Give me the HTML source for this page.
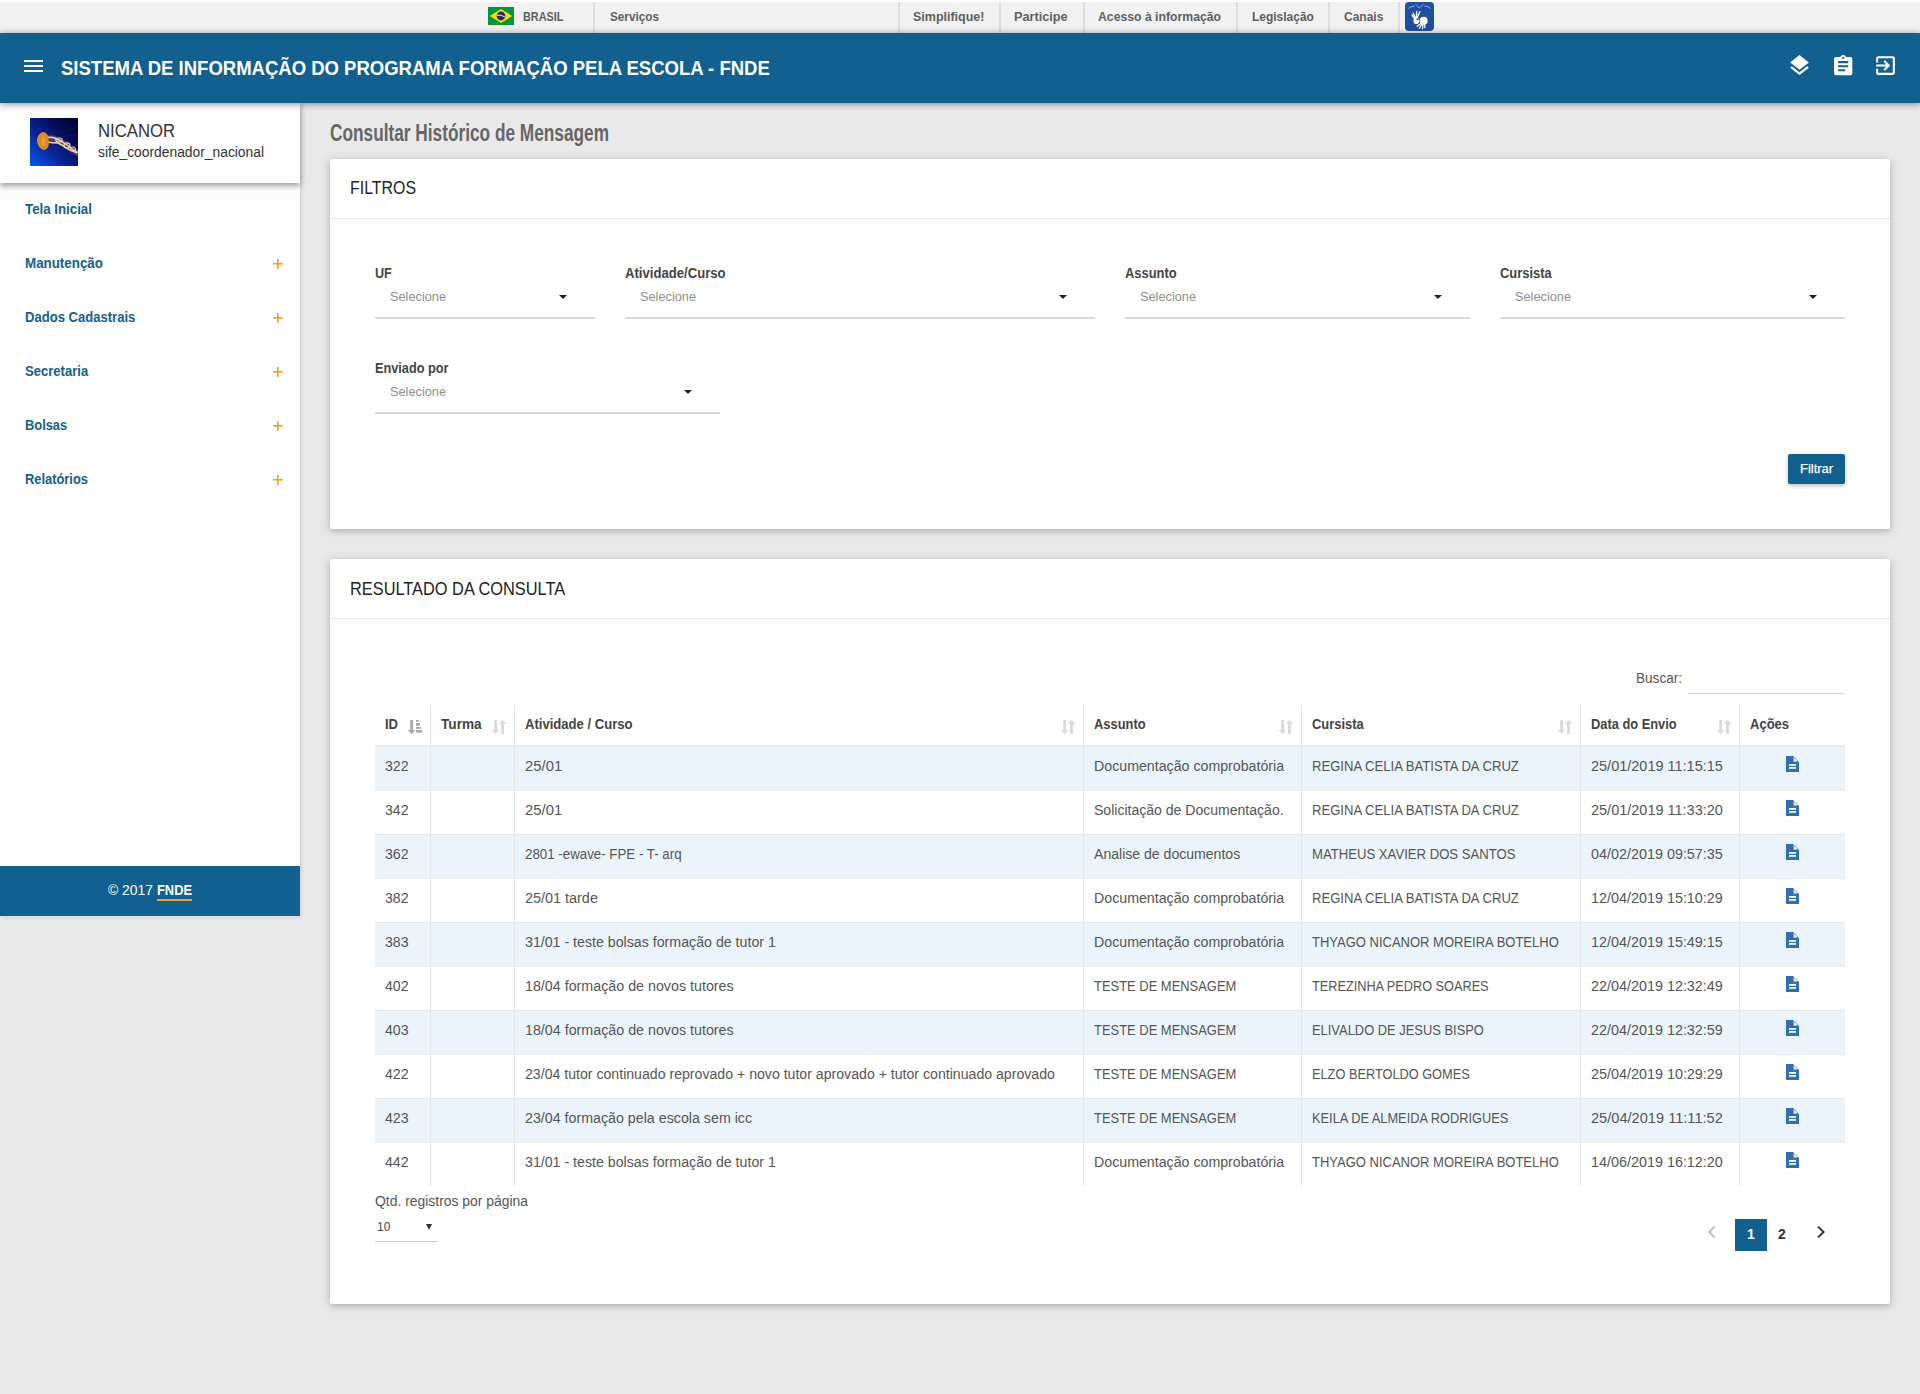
<!DOCTYPE html>
<html lang="pt">
<head>
<meta charset="utf-8">
<title>Consultar Histórico de Mensagem</title>
<style>
*{box-sizing:border-box;margin:0;padding:0}
html,body{width:1920px;height:1394px;overflow:hidden}
body{background:#e9e9e9;font-family:"Liberation Sans",sans-serif;position:relative;color:#444}
.abs{position:absolute}
.sx{display:inline-block;transform-origin:0 50%}
#topw{position:absolute;left:0;top:0;width:1920px;height:2px;background:#fff}
#gov{position:absolute;left:0;top:2px;width:1920px;height:31px;background:#f1f1f1;z-index:2}
#gov .t{position:absolute;top:-1px;height:31px;line-height:31px;font-size:13px;font-weight:bold;color:#5f5f5f;white-space:nowrap}
#gov .sep{position:absolute;top:0;width:2px;height:31px;background:#dedede}
#hdr{position:absolute;left:0;top:33px;width:1920px;height:70px;background:#12608f;box-shadow:0 1px 7px rgba(0,0,0,.45);z-index:3}
#hdr .title{position:absolute;left:61px;top:0;line-height:70px;font-size:20px;font-weight:bold;color:#fff;white-space:nowrap}
.ham{position:absolute;left:24px;width:19px;height:2px;background:#fff}
#side{position:absolute;left:0;top:103px;width:300px;height:813px;background:#fdfdfd;box-shadow:1px 1px 5px rgba(0,0,0,.12);z-index:1}
#user{position:absolute;left:0;top:0;width:300px;height:80px;background:#fdfdfd;box-shadow:0 3px 6px rgba(0,0,0,.38)}
.menu{position:absolute;left:25px;font-size:14px;line-height:16px;font-weight:bold;color:#165f8e;white-space:nowrap}
#foot{position:absolute;left:0;top:763px;width:300px;height:50px;background:#12608f;color:#fff;font-size:14px;line-height:16px}
#ptitle{position:absolute;left:330px;top:118.5px;font-size:23px;line-height:28px;font-weight:bold;color:#666;white-space:nowrap}
.card{position:absolute;left:330px;width:1560px;background:#fff;border-radius:2px;box-shadow:0 2px 5px rgba(0,0,0,.16),0 2px 14px rgba(0,0,0,.13)}
.ch{position:absolute;font-size:18px;line-height:20px;color:#222;white-space:nowrap}
.cl{position:absolute;width:1560px;height:1px;background:#e9e9e9}
.lbl{position:absolute;font-size:14px;line-height:16px;font-weight:bold;color:#444;white-space:nowrap}
.ul{position:absolute;height:2px;background:#d9d9d9}
.selt{position:absolute;font-size:13px;line-height:15px;color:#8e8e8e;white-space:nowrap}
.caret{position:absolute;width:0;height:0;border-left:4.5px solid transparent;border-right:4.5px solid transparent;border-top:4.5px solid #222}
.row{position:absolute;left:375px;width:1470px;height:44px;border-bottom:1px solid #e9e9e9}
.row.odd{background:#ebf4fb}
.vl{position:absolute;width:1px;background:#e6e6e6}
.td{position:absolute;font-size:14px;line-height:16px;color:#555;white-space:nowrap}
.th{position:absolute;font-size:14px;line-height:16px;font-weight:bold;color:#444;white-space:nowrap}
</style>
</head>
<body>

<div id="topw"></div>
<div id="gov">
<svg class="abs" style="left:488px;top:5px" width="26" height="18" viewBox="0 0 26 18"><rect width="26" height="18" fill="#009639"/><path d="M13 2 L24.2 9 L13 16 L1.8 9 Z" fill="#fedd00"/><circle cx="13" cy="9" r="4.4" fill="#27287b"/><path d="M8.8 8.3 Q13 7.2 17.2 10.2" stroke="#fff" stroke-width=".9" fill="none"/></svg>
<div class="t" style="left:522.5px"><span class="sx" style="transform:scaleX(0.8370)">BRASIL</span></div>
<div class="t" style="left:610px"><span class="sx" style="transform:scaleX(0.9040)">Serviços</span></div>
<div class="t" style="left:912.6px"><span class="sx" style="transform:scaleX(0.9598)">Simplifique!</span></div>
<div class="t" style="left:1014.4px"><span class="sx" style="transform:scaleX(0.9761)">Participe</span></div>
<div class="t" style="left:1098px"><span class="sx" style="transform:scaleX(0.9406)">Acesso à informação</span></div>
<div class="t" style="left:1251.6px"><span class="sx" style="transform:scaleX(0.9212)">Legislação</span></div>
<div class="t" style="left:1343.7px"><span class="sx" style="transform:scaleX(0.9219)">Canais</span></div>
<div class="sep" style="left:593px"></div>
<div class="sep" style="left:898px"></div>
<div class="sep" style="left:999px"></div>
<div class="sep" style="left:1083px"></div>
<div class="sep" style="left:1236px"></div>
<div class="sep" style="left:1328px"></div>
<div class="sep" style="left:1398px"></div>
<svg class="abs" style="left:1405px;top:0px" width="29" height="29" viewBox="0 0 29 29"><rect x="0" y="0" width="29" height="29" rx="4" fill="#1f4fa0"/><path d="M3.3 6.5 Q6 4.2 9.5 4 M10.8 2.3 L14.3 6.2 L18.2 2.3 M19.3 4 Q23 4.2 25.8 6.5" stroke="#fff" stroke-opacity=".6" stroke-width=".9" fill="none"/><g transform="translate(-4.8,-0.3)"><g stroke="#fff" stroke-linecap="round" fill="none"><path d="M16 17 L16.5 9.8 M17 16 L19.6 10 M15 16 L13 11.5 M14.5 17 L11.8 13.3" stroke-width="1.3"/><path d="M21.5 21 L17 24.6 M22 22 L19 26.6 M23 22 L22.2 27.2 M24.5 22 L24.6 26" stroke-width="1.2"/></g><ellipse cx="16" cy="19" rx="2.8" ry="3.4" fill="#fff"/><ellipse cx="23.4" cy="19" rx="4" ry="3.9" fill="#fff"/><circle cx="17.3" cy="17.5" r="1" fill="#1f4fa0"/></g></svg>
</div>
<div id="hdr">
<div class="ham" style="top:27px"></div>
<div class="ham" style="top:32px"></div>
<div class="ham" style="top:37px"></div>
<div class="title"><span class="sx" style="transform:scaleX(0.9254)">SISTEMA DE INFORMAÇÃO DO PROGRAMA FORMAÇÃO PELA ESCOLA - FNDE</span></div>
<svg class="abs" style="left:1787.3px;top:20.3px" width="25" height="25" viewBox="0 0 24 24"><path fill="#fff" d="M11.99 18.54l-7.37-5.73L3 14.07l9 7 9-7-1.63-1.27-7.38 5.74zM12 16l7.36-5.73L21 9l-9-7-9 7 1.63 1.27L12 16z"/></svg>
<svg class="abs" style="left:1830.8px;top:20.6px" width="24.4" height="24.4" viewBox="0 0 24 24"><path fill="#fff" d="M19 3h-4.18C14.4 1.84 13.3 1 12 1c-1.3 0-2.4.84-2.82 2H5c-1.1 0-2 .9-2 2v14c0 1.1.9 2 2 2h14c1.1 0 2-.9 2-2V5c0-1.1-.9-2-2-2zm-7 0c.55 0 1 .45 1 1s-.45 1-1 1-1-.45-1-1 .45-1 1-1zm2 14H7v-2h7v2zm3-4H7v-2h10v2zm0-4H7V7h10v2z"/></svg>
<svg class="abs" style="left:1873.2px;top:20.2px" width="25" height="25" viewBox="0 0 24 24"><path fill="#fff" d="M10.09 15.59L11.5 17l5-5-5-5-1.41 1.41L12.67 11H3v2h9.67l-2.58 2.59zM19 3H5c-1.11 0-2 .9-2 2v4h2V5h14v14H5v-4H3v4c0 1.1.89 2 2 2h14c1.1 0 2-.9 2-2V5c0-1.1-.9-2-2-2z"/></svg>
</div>
<div id="side">
<div id="user">
<svg class="abs" style="left:30px;top:15px" width="48" height="48" viewBox="0 0 48 48"><defs><linearGradient id="jg" x1="0" y1="1" x2="1" y2="0"><stop offset="0" stop-color="#0458ea"/><stop offset=".38" stop-color="#0a2596"/><stop offset=".7" stop-color="#030b58"/><stop offset="1" stop-color="#000030"/></linearGradient></defs><rect width="48" height="48" fill="url(#jg)"/><path d="M18 17 Q30 14 48 9 M19 19 Q32 20 47 16 M20 27 Q34 31 46 38" stroke="#a04018" stroke-width=".5" fill="none" opacity=".3"/><path d="M16 21 Q22 19 27 22 Q33 25 37 28 Q42 32 48 35" stroke="#d9a070" stroke-width="6" fill="none" opacity=".3" stroke-linecap="round"/><path d="M16 20 Q22 18 27 21 Q33 24 37 27 Q42 31 48 34.5" stroke="#ecd4b4" stroke-width="1.5" fill="none"/><path d="M17 24 Q23 25 28 25 Q34 28 38 31 Q43 33 47 35" stroke="#f0d4ac" stroke-width="1.4" fill="none"/><ellipse cx="29" cy="22" rx="3.2" ry="2" stroke="#f0dcc0" stroke-width="1.1" fill="none"/><ellipse cx="37" cy="27.5" rx="3" ry="2.6" stroke="#ecd2b0" stroke-width="1.1" fill="none"/><ellipse cx="43" cy="31" rx="2.4" ry="2" stroke="#f0c890" stroke-width="1.1" fill="none"/><path d="M13 14 Q7 16 7 22.5 Q7.5 30 14 32 Q18.5 31 18.8 26 L18.3 18.5 Q16.5 14 13 14 Z" fill="#df8a1e"/><path d="M12.5 19 Q10.5 22 11.5 26 Q13 28.5 15 27 Q16 24 14.5 19.5 Z" fill="#f2b050" opacity=".6"/></svg>
<div class="abs" style="left:98px;top:18px;font-size:18px;line-height:20px;color:#333;white-space:nowrap"><span class="sx" style="transform:scaleX(0.9277)">NICANOR</span></div>
<div class="abs" style="left:98px;top:41px;font-size:14px;line-height:17px;color:#333;white-space:nowrap"><span class="sx" style="transform:scaleX(0.9874)">sife_coordenador_nacional</span></div>
</div>
<div class="menu" style="top:98px"><span class="sx" style="transform:scaleX(0.9485)">Tela Inicial</span></div>
<div class="menu" style="top:152px"><span class="sx" style="transform:scaleX(0.9541)">Manutenção</span></div>
<svg class="abs" style="left:272.5px;top:156px" width="10" height="10" viewBox="0 0 10 10"><rect x="0" y="4" width="9.5" height="1.6" fill="#f5a01a"/><rect x="4" y="0" width="1.6" height="10" fill="#f5a01a"/></svg>
<div class="menu" style="top:206px"><span class="sx" style="transform:scaleX(0.9330)">Dados Cadastrais</span></div>
<svg class="abs" style="left:272.5px;top:210px" width="10" height="10" viewBox="0 0 10 10"><rect x="0" y="4" width="9.5" height="1.6" fill="#f5a01a"/><rect x="4" y="0" width="1.6" height="10" fill="#f5a01a"/></svg>
<div class="menu" style="top:260px"><span class="sx" style="transform:scaleX(0.9329)">Secretaria</span></div>
<svg class="abs" style="left:272.5px;top:264px" width="10" height="10" viewBox="0 0 10 10"><rect x="0" y="4" width="9.5" height="1.6" fill="#f5a01a"/><rect x="4" y="0" width="1.6" height="10" fill="#f5a01a"/></svg>
<div class="menu" style="top:314px"><span class="sx" style="transform:scaleX(0.9181)">Bolsas</span></div>
<svg class="abs" style="left:272.5px;top:318px" width="10" height="10" viewBox="0 0 10 10"><rect x="0" y="4" width="9.5" height="1.6" fill="#f5a01a"/><rect x="4" y="0" width="1.6" height="10" fill="#f5a01a"/></svg>
<div class="menu" style="top:368px"><span class="sx" style="transform:scaleX(0.9195)">Relatórios</span></div>
<svg class="abs" style="left:272.5px;top:372px" width="10" height="10" viewBox="0 0 10 10"><rect x="0" y="4" width="9.5" height="1.6" fill="#f5a01a"/><rect x="4" y="0" width="1.6" height="10" fill="#f5a01a"/></svg>
<div id="foot"><div class="abs" style="left:108px;top:16px;white-space:nowrap"><span class="sx" style="transform:scaleX(0.9923)">© 2017</span> <b style="position:absolute;left:49px;top:0"><span class="sx" style="transform:scaleX(0.9184)">FNDE</span><i style="position:absolute;left:0;width:35px;top:17px;height:2px;background:#f5a01a"></i></b></div></div>
</div>
<div id="ptitle"><span class="sx" style="transform:scaleX(0.7502)">Consultar Histórico de Mensagem</span></div>
<div class="card" style="top:159px;height:370px"></div>
<div class="ch" style="left:350px;top:178px"><span class="sx" style="transform:scaleX(0.8839)">FILTROS</span></div>
<div class="cl" style="left:330px;top:218px"></div>
<div class="lbl" style="left:375px;top:265px"><span class="sx" style="transform:scaleX(0.9011)">UF</span></div>
<div class="selt" style="left:390px;top:289px"><span class="sx" style="transform:scaleX(0.9808)">Selecione</span></div>
<div class="caret" style="left:558.5px;top:295px"></div>
<div class="ul" style="left:375px;top:317px;width:220px"></div>
<div class="lbl" style="left:625px;top:265px"><span class="sx" style="transform:scaleX(0.9372)">Atividade/Curso</span></div>
<div class="selt" style="left:640px;top:289px"><span class="sx" style="transform:scaleX(0.9808)">Selecione</span></div>
<div class="caret" style="left:1059.0px;top:295px"></div>
<div class="ul" style="left:625px;top:317px;width:470px"></div>
<div class="lbl" style="left:1125px;top:265px"><span class="sx" style="transform:scaleX(0.9209)">Assunto</span></div>
<div class="selt" style="left:1140px;top:289px"><span class="sx" style="transform:scaleX(0.9808)">Selecione</span></div>
<div class="caret" style="left:1433.5px;top:295px"></div>
<div class="ul" style="left:1125px;top:317px;width:345px"></div>
<div class="lbl" style="left:1500px;top:265px"><span class="sx" style="transform:scaleX(0.9210)">Cursista</span></div>
<div class="selt" style="left:1515px;top:289px"><span class="sx" style="transform:scaleX(0.9808)">Selecione</span></div>
<div class="caret" style="left:1808.5px;top:295px"></div>
<div class="ul" style="left:1500px;top:317px;width:345px"></div>
<div class="lbl" style="left:375px;top:360px"><span class="sx" style="transform:scaleX(0.9072)">Enviado por</span></div>
<div class="selt" style="left:390px;top:384px"><span class="sx" style="transform:scaleX(0.9808)">Selecione</span></div>
<div class="caret" style="left:683.5px;top:390px"></div>
<div class="ul" style="left:375px;top:412px;width:345px"></div>
<div class="abs" style="left:1788px;top:454px;width:57px;height:30px;background:#12608f;border-radius:2px;box-shadow:0 2px 4px rgba(0,0,0,.25);color:#fff;font-size:13px;line-height:30px;padding-left:12px;white-space:nowrap;-webkit-text-stroke:.25px #fff"><span class="sx" style="transform:scaleX(0.9935)">Filtrar</span></div>
<div class="card" style="top:559px;height:745px"></div>
<div class="ch" style="left:350px;top:579px"><span class="sx" style="transform:scaleX(0.9087)">RESULTADO DA CONSULTA</span></div>
<div class="cl" style="left:330px;top:618px"></div>
<div class="td" style="left:1635.5px;top:670px"><span class="sx" style="transform:scaleX(0.9692)">Buscar:</span></div>
<div class="abs" style="left:1688px;top:693px;width:157px;height:1px;background:#d6d6d6"></div>
<div class="abs" style="left:375px;top:745px;width:1470px;height:2px;background:#ebebeb"></div>
<div class="th" style="left:385px;top:716px"><span class="sx" style="transform:scaleX(0.9277)">ID</span></div>
<div class="th" style="left:441px;top:716px"><span class="sx" style="transform:scaleX(0.9743)">Turma</span></div>
<div class="th" style="left:525px;top:716px"><span class="sx" style="transform:scaleX(0.9341)">Atividade / Curso</span></div>
<div class="th" style="left:1094px;top:716px"><span class="sx" style="transform:scaleX(0.9209)">Assunto</span></div>
<div class="th" style="left:1312px;top:716px"><span class="sx" style="transform:scaleX(0.9210)">Cursista</span></div>
<div class="th" style="left:1591px;top:716px"><span class="sx" style="transform:scaleX(0.9173)">Data do Envio</span></div>
<div class="th" style="left:1750px;top:716px"><span class="sx" style="transform:scaleX(0.9300)">Ações</span></div>
<svg class="abs" style="left:407.5px;top:720px" width="15" height="15" viewBox="0 0 15 15"><rect x="2.2" y="0" width="2.9" height="10.3" fill="#a9a9a9"/><path d="M-0.4 10 H7.6 L3.6 14 Z" fill="#a9a9a9"/><rect x="8" y="0" width="2.7" height="1.8" fill="#a9a9a9"/><rect x="8" y="3" width="4" height="2.8" fill="#a9a9a9"/><rect x="8" y="7" width="5" height="1.8" fill="#a9a9a9"/><rect x="8" y="10" width="6" height="2.6" fill="#a9a9a9"/></svg>
<svg class="abs" style="left:491.5px;top:720px" width="15" height="15" viewBox="0 0 15 15"><rect x="2.2" y="0" width="2.9" height="10.3" fill="#dadada"/><path d="M-0.2 10 H7.4 L3.6 14 Z" fill="#dadada"/><rect x="9" y="3.8" width="2.9" height="10.2" fill="#dadada"/><path d="M6.8 4 H14.4 L10.6 0 Z" fill="#dadada"/></svg>
<svg class="abs" style="left:1060.5px;top:720px" width="15" height="15" viewBox="0 0 15 15"><rect x="2.2" y="0" width="2.9" height="10.3" fill="#dadada"/><path d="M-0.2 10 H7.4 L3.6 14 Z" fill="#dadada"/><rect x="9" y="3.8" width="2.9" height="10.2" fill="#dadada"/><path d="M6.8 4 H14.4 L10.6 0 Z" fill="#dadada"/></svg>
<svg class="abs" style="left:1278.5px;top:720px" width="15" height="15" viewBox="0 0 15 15"><rect x="2.2" y="0" width="2.9" height="10.3" fill="#dadada"/><path d="M-0.2 10 H7.4 L3.6 14 Z" fill="#dadada"/><rect x="9" y="3.8" width="2.9" height="10.2" fill="#dadada"/><path d="M6.8 4 H14.4 L10.6 0 Z" fill="#dadada"/></svg>
<svg class="abs" style="left:1557.5px;top:720px" width="15" height="15" viewBox="0 0 15 15"><rect x="2.2" y="0" width="2.9" height="10.3" fill="#dadada"/><path d="M-0.2 10 H7.4 L3.6 14 Z" fill="#dadada"/><rect x="9" y="3.8" width="2.9" height="10.2" fill="#dadada"/><path d="M6.8 4 H14.4 L10.6 0 Z" fill="#dadada"/></svg>
<svg class="abs" style="left:1716.5px;top:720px" width="15" height="15" viewBox="0 0 15 15"><rect x="2.2" y="0" width="2.9" height="10.3" fill="#dadada"/><path d="M-0.2 10 H7.4 L3.6 14 Z" fill="#dadada"/><rect x="9" y="3.8" width="2.9" height="10.2" fill="#dadada"/><path d="M6.8 4 H14.4 L10.6 0 Z" fill="#dadada"/></svg>
<div class="row odd" style="top:747px;height:44px"></div>
<div class="td" style="left:385px;top:758px"><span class="sx" style="transform:scaleX(1.0097)">322</span></div>
<div class="td" style="left:525px;top:758px"><span class="sx" style="transform:scaleX(1.0619)">25/01</span></div>
<div class="td" style="left:1094px;top:758px"><span class="sx" style="transform:scaleX(1.0136)">Documentação comprobatória</span></div>
<div class="td" style="left:1312px;top:758px"><span class="sx" style="transform:scaleX(0.9352)">REGINA CELIA BATISTA DA CRUZ</span></div>
<div class="td" style="left:1591px;top:758px"><span class="sx" style="transform:scaleX(1.0346)">25/01/2019 11:15:15</span></div>
<svg class="abs" style="left:1786px;top:756px" width="13" height="16" viewBox="0 0 13 16"><path d="M0 0 H7 L13 6 V16 H0 Z" fill="#2f70b4"/><path d="M7.6 1.2 V5.4 H11.8 Z" fill="#fff"/><rect x="3" y="8" width="7" height="1.8" fill="#fff"/><rect x="3" y="11" width="7" height="1.8" fill="#fff"/></svg>
<div class="row" style="top:791px;height:44px"></div>
<div class="td" style="left:385px;top:802px"><span class="sx" style="transform:scaleX(1.0097)">342</span></div>
<div class="td" style="left:525px;top:802px"><span class="sx" style="transform:scaleX(1.0619)">25/01</span></div>
<div class="td" style="left:1094px;top:802px"><span class="sx" style="transform:scaleX(1.0025)">Solicitação de Documentação.</span></div>
<div class="td" style="left:1312px;top:802px"><span class="sx" style="transform:scaleX(0.9352)">REGINA CELIA BATISTA DA CRUZ</span></div>
<div class="td" style="left:1591px;top:802px"><span class="sx" style="transform:scaleX(1.0346)">25/01/2019 11:33:20</span></div>
<svg class="abs" style="left:1786px;top:800px" width="13" height="16" viewBox="0 0 13 16"><path d="M0 0 H7 L13 6 V16 H0 Z" fill="#2f70b4"/><path d="M7.6 1.2 V5.4 H11.8 Z" fill="#fff"/><rect x="3" y="8" width="7" height="1.8" fill="#fff"/><rect x="3" y="11" width="7" height="1.8" fill="#fff"/></svg>
<div class="row odd" style="top:835px;height:44px"></div>
<div class="td" style="left:385px;top:846px"><span class="sx" style="transform:scaleX(1.0097)">362</span></div>
<div class="td" style="left:525px;top:846px"><span class="sx" style="transform:scaleX(0.9504)">2801 -ewave- FPE - T- arq</span></div>
<div class="td" style="left:1094px;top:846px"><span class="sx" style="transform:scaleX(1.0046)">Analise de documentos</span></div>
<div class="td" style="left:1312px;top:846px"><span class="sx" style="transform:scaleX(0.9376)">MATHEUS XAVIER DOS SANTOS</span></div>
<div class="td" style="left:1591px;top:846px"><span class="sx" style="transform:scaleX(1.0262)">04/02/2019 09:57:35</span></div>
<svg class="abs" style="left:1786px;top:844px" width="13" height="16" viewBox="0 0 13 16"><path d="M0 0 H7 L13 6 V16 H0 Z" fill="#2f70b4"/><path d="M7.6 1.2 V5.4 H11.8 Z" fill="#fff"/><rect x="3" y="8" width="7" height="1.8" fill="#fff"/><rect x="3" y="11" width="7" height="1.8" fill="#fff"/></svg>
<div class="row" style="top:879px;height:44px"></div>
<div class="td" style="left:385px;top:890px"><span class="sx" style="transform:scaleX(1.0097)">382</span></div>
<div class="td" style="left:525px;top:890px"><span class="sx" style="transform:scaleX(1.0291)">25/01 tarde</span></div>
<div class="td" style="left:1094px;top:890px"><span class="sx" style="transform:scaleX(1.0136)">Documentação comprobatória</span></div>
<div class="td" style="left:1312px;top:890px"><span class="sx" style="transform:scaleX(0.9352)">REGINA CELIA BATISTA DA CRUZ</span></div>
<div class="td" style="left:1591px;top:890px"><span class="sx" style="transform:scaleX(1.0262)">12/04/2019 15:10:29</span></div>
<svg class="abs" style="left:1786px;top:888px" width="13" height="16" viewBox="0 0 13 16"><path d="M0 0 H7 L13 6 V16 H0 Z" fill="#2f70b4"/><path d="M7.6 1.2 V5.4 H11.8 Z" fill="#fff"/><rect x="3" y="8" width="7" height="1.8" fill="#fff"/><rect x="3" y="11" width="7" height="1.8" fill="#fff"/></svg>
<div class="row odd" style="top:923px;height:44px"></div>
<div class="td" style="left:385px;top:934px"><span class="sx" style="transform:scaleX(1.0097)">383</span></div>
<div class="td" style="left:525px;top:934px"><span class="sx" style="transform:scaleX(1.0136)">31/01 - teste bolsas formação de tutor 1</span></div>
<div class="td" style="left:1094px;top:934px"><span class="sx" style="transform:scaleX(1.0136)">Documentação comprobatória</span></div>
<div class="td" style="left:1312px;top:934px"><span class="sx" style="transform:scaleX(0.9284)">THYAGO NICANOR MOREIRA BOTELHO</span></div>
<div class="td" style="left:1591px;top:934px"><span class="sx" style="transform:scaleX(1.0262)">12/04/2019 15:49:15</span></div>
<svg class="abs" style="left:1786px;top:932px" width="13" height="16" viewBox="0 0 13 16"><path d="M0 0 H7 L13 6 V16 H0 Z" fill="#2f70b4"/><path d="M7.6 1.2 V5.4 H11.8 Z" fill="#fff"/><rect x="3" y="8" width="7" height="1.8" fill="#fff"/><rect x="3" y="11" width="7" height="1.8" fill="#fff"/></svg>
<div class="row" style="top:967px;height:44px"></div>
<div class="td" style="left:385px;top:978px"><span class="sx" style="transform:scaleX(1.0097)">402</span></div>
<div class="td" style="left:525px;top:978px"><span class="sx" style="transform:scaleX(1.0194)">18/04 formação de novos tutores</span></div>
<div class="td" style="left:1094px;top:978px"><span class="sx" style="transform:scaleX(0.9241)">TESTE DE MENSAGEM</span></div>
<div class="td" style="left:1312px;top:978px"><span class="sx" style="transform:scaleX(0.9080)">TEREZINHA PEDRO SOARES</span></div>
<div class="td" style="left:1591px;top:978px"><span class="sx" style="transform:scaleX(1.0262)">22/04/2019 12:32:49</span></div>
<svg class="abs" style="left:1786px;top:976px" width="13" height="16" viewBox="0 0 13 16"><path d="M0 0 H7 L13 6 V16 H0 Z" fill="#2f70b4"/><path d="M7.6 1.2 V5.4 H11.8 Z" fill="#fff"/><rect x="3" y="8" width="7" height="1.8" fill="#fff"/><rect x="3" y="11" width="7" height="1.8" fill="#fff"/></svg>
<div class="row odd" style="top:1011px;height:44px"></div>
<div class="td" style="left:385px;top:1022px"><span class="sx" style="transform:scaleX(1.0097)">403</span></div>
<div class="td" style="left:525px;top:1022px"><span class="sx" style="transform:scaleX(1.0194)">18/04 formação de novos tutores</span></div>
<div class="td" style="left:1094px;top:1022px"><span class="sx" style="transform:scaleX(0.9241)">TESTE DE MENSAGEM</span></div>
<div class="td" style="left:1312px;top:1022px"><span class="sx" style="transform:scaleX(0.9219)">ELIVALDO DE JESUS BISPO</span></div>
<div class="td" style="left:1591px;top:1022px"><span class="sx" style="transform:scaleX(1.0262)">22/04/2019 12:32:59</span></div>
<svg class="abs" style="left:1786px;top:1020px" width="13" height="16" viewBox="0 0 13 16"><path d="M0 0 H7 L13 6 V16 H0 Z" fill="#2f70b4"/><path d="M7.6 1.2 V5.4 H11.8 Z" fill="#fff"/><rect x="3" y="8" width="7" height="1.8" fill="#fff"/><rect x="3" y="11" width="7" height="1.8" fill="#fff"/></svg>
<div class="row" style="top:1055px;height:44px"></div>
<div class="td" style="left:385px;top:1066px"><span class="sx" style="transform:scaleX(1.0097)">422</span></div>
<div class="td" style="left:525px;top:1066px"><span class="sx" style="transform:scaleX(1.0086)">23/04 tutor continuado reprovado + novo tutor aprovado + tutor continuado aprovado</span></div>
<div class="td" style="left:1094px;top:1066px"><span class="sx" style="transform:scaleX(0.9241)">TESTE DE MENSAGEM</span></div>
<div class="td" style="left:1312px;top:1066px"><span class="sx" style="transform:scaleX(0.9117)">ELZO BERTOLDO GOMES</span></div>
<div class="td" style="left:1591px;top:1066px"><span class="sx" style="transform:scaleX(1.0262)">25/04/2019 10:29:29</span></div>
<svg class="abs" style="left:1786px;top:1064px" width="13" height="16" viewBox="0 0 13 16"><path d="M0 0 H7 L13 6 V16 H0 Z" fill="#2f70b4"/><path d="M7.6 1.2 V5.4 H11.8 Z" fill="#fff"/><rect x="3" y="8" width="7" height="1.8" fill="#fff"/><rect x="3" y="11" width="7" height="1.8" fill="#fff"/></svg>
<div class="row odd" style="top:1099px;height:44px"></div>
<div class="td" style="left:385px;top:1110px"><span class="sx" style="transform:scaleX(1.0097)">423</span></div>
<div class="td" style="left:525px;top:1110px"><span class="sx" style="transform:scaleX(1.0168)">23/04 formação pela escola sem icc</span></div>
<div class="td" style="left:1094px;top:1110px"><span class="sx" style="transform:scaleX(0.9241)">TESTE DE MENSAGEM</span></div>
<div class="td" style="left:1312px;top:1110px"><span class="sx" style="transform:scaleX(0.9143)">KEILA DE ALMEIDA RODRIGUES</span></div>
<div class="td" style="left:1591px;top:1110px"><span class="sx" style="transform:scaleX(1.0431)">25/04/2019 11:11:52</span></div>
<svg class="abs" style="left:1786px;top:1108px" width="13" height="16" viewBox="0 0 13 16"><path d="M0 0 H7 L13 6 V16 H0 Z" fill="#2f70b4"/><path d="M7.6 1.2 V5.4 H11.8 Z" fill="#fff"/><rect x="3" y="8" width="7" height="1.8" fill="#fff"/><rect x="3" y="11" width="7" height="1.8" fill="#fff"/></svg>
<div class="row" style="top:1143px;height:44px;border-bottom:none"></div>
<div class="td" style="left:385px;top:1154px"><span class="sx" style="transform:scaleX(1.0097)">442</span></div>
<div class="td" style="left:525px;top:1154px"><span class="sx" style="transform:scaleX(1.0136)">31/01 - teste bolsas formação de tutor 1</span></div>
<div class="td" style="left:1094px;top:1154px"><span class="sx" style="transform:scaleX(1.0136)">Documentação comprobatória</span></div>
<div class="td" style="left:1312px;top:1154px"><span class="sx" style="transform:scaleX(0.9284)">THYAGO NICANOR MOREIRA BOTELHO</span></div>
<div class="td" style="left:1591px;top:1154px"><span class="sx" style="transform:scaleX(1.0262)">14/06/2019 16:12:20</span></div>
<svg class="abs" style="left:1786px;top:1152px" width="13" height="16" viewBox="0 0 13 16"><path d="M0 0 H7 L13 6 V16 H0 Z" fill="#2f70b4"/><path d="M7.6 1.2 V5.4 H11.8 Z" fill="#fff"/><rect x="3" y="8" width="7" height="1.8" fill="#fff"/><rect x="3" y="11" width="7" height="1.8" fill="#fff"/></svg>
<div class="vl" style="left:430px;top:705px;height:481px"></div>
<div class="vl" style="left:514px;top:705px;height:481px"></div>
<div class="vl" style="left:1083px;top:705px;height:481px"></div>
<div class="vl" style="left:1301px;top:705px;height:481px"></div>
<div class="vl" style="left:1580px;top:705px;height:481px"></div>
<div class="vl" style="left:1739px;top:705px;height:481px"></div>
<div class="td" style="left:375px;top:1193px"><span class="sx" style="transform:scaleX(0.9930)">Qtd. registros por página</span></div>
<div class="abs" style="left:377px;top:1220px;font-size:12px;line-height:14px;color:#444">10</div>
<div class="abs" style="left:426px;top:1224px;width:0;height:0;border-left:3px solid transparent;border-right:3px solid transparent;border-top:6px solid #333"></div>
<div class="abs" style="left:375px;top:1241px;width:63px;height:1px;background:#ccc"></div>
<svg class="abs" style="left:1706px;top:1225px" width="12" height="14" viewBox="0 0 12 14"><path d="M8.6 1.6 L3.2 7 L8.6 12.4" stroke="#bbb" stroke-width="2" fill="none"/></svg>
<div class="abs" style="left:1735px;top:1219px;width:32px;height:32px;background:#12608f;color:#fff;font-size:14px;font-weight:bold;line-height:30px;text-align:center">1</div>
<div class="abs" style="left:1778px;top:1219px;width:10px;height:32px;color:#333;font-size:14px;font-weight:bold;line-height:30px">2</div>
<svg class="abs" style="left:1815px;top:1225px" width="12" height="14" viewBox="0 0 12 14"><path d="M3 1.6 L8.6 7 L3 12.4" stroke="#333" stroke-width="2" fill="none"/></svg>
</body>
</html>
